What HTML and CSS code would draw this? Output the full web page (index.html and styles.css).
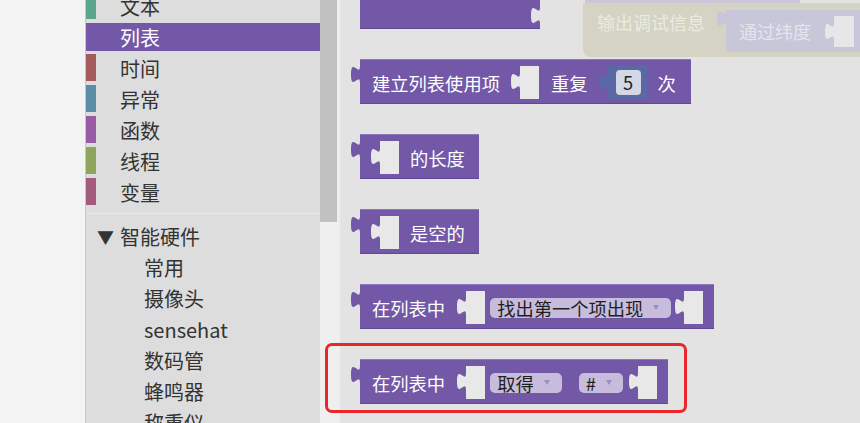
FILE: index.html
```html
<!DOCTYPE html>
<html lang="zh-CN">
<head>
<meta charset="utf-8">
<title>Blockly 列表</title>
<link rel="stylesheet" href="styles.css">
</head>
<body>
<div class="app">
  <aside class="toolbox">
    <div class="cat first"><span class="strip c-text"></span><span class="label">文本</span></div>
    <div class="cat sel"><span class="strip"></span><span class="label">列表</span></div>
    <div class="cat"><span class="strip c-time"></span><span class="label">时间</span></div>
    <div class="cat"><span class="strip c-exc"></span><span class="label">异常</span></div>
    <div class="cat"><span class="strip c-func"></span><span class="label">函数</span></div>
    <div class="cat"><span class="strip c-thread"></span><span class="label">线程</span></div>
    <div class="cat"><span class="strip c-var"></span><span class="label">变量</span></div>
    <div class="sep"></div>
    <div class="tree-head"><span class="arrow">▼</span>智能硬件</div>
    <div class="sub">常用</div>
    <div class="sub">摄像头</div>
    <div class="sub">sensehat</div>
    <div class="sub">数码管</div>
    <div class="sub">蜂鸣器</div>
    <div class="sub">称重仪</div>
  </aside>
  <div class="scrollbar"><div class="thumb"></div></div>
  <main class="flyout">
    <div class="ghost-top"></div>
    <div class="ghost">
      <span class="ghost-txt">输出调试信息</span>
      <div class="ghost-in">
        <svg class="tab" width="9" height="17" viewBox="0 0 9 17"><path d="M9 0C9 11.3 0 -9 0 8.5S9 5.7 9 17Z" fill="#c8c7d9"/></svg>
        <span class="ghost-label">通过纬度</span>
        <svg class="ghost-sock" width="29" height="31" viewBox="0 0 29 31"><path d="M29 0H9V7C9 18.3 0 -2 0 15.5S9 12.7 9 24V31H29Z" fill="#e7e7ea"/></svg>
      </div>
    </div>

    <div class="blocks">
      <div class="block top-block">
        <svg class="notch" width="9" height="17" viewBox="0 0 9 17"><path d="M9 0C9 11.3 0 -9 0 8.5S9 5.7 9 17Z" fill="#e3e3e3"/></svg>
      </div>

      <div class="block">
        <svg class="tab" width="9" height="17" viewBox="0 0 9 17"><path d="M9 0C9 11.3 0 -9 0 8.5S9 5.7 9 17Z" fill="#7258a6"/></svg>
        <span class="txt">建立列表使用项</span>
        <svg class="sock" width="28" height="33" viewBox="0 0 28 33"><path d="M28 0H9V7C9 18.3 0 -2 0 15.5S9 12.7 9 24V33H28Z" fill="#e8e8e8"/></svg>
        <span class="txt">重复</span>
        <div class="num">
          <svg class="tab num-tab" width="9" height="17" viewBox="0 0 9 17"><path d="M9 0C9 11.3 0 -9 0 8.5S9 5.7 9 17Z" fill="#5b68a6"/></svg>
          <span class="field">5</span>
        </div>
        <span class="txt t-ci">次</span>
      </div>

      <div class="block">
        <svg class="tab" width="9" height="17" viewBox="0 0 9 17"><path d="M9 0C9 11.3 0 -9 0 8.5S9 5.7 9 17Z" fill="#7258a6"/></svg>
        <svg class="sock" width="28" height="33" viewBox="0 0 28 33"><path d="M28 0H9V7C9 18.3 0 -2 0 15.5S9 12.7 9 24V33H28Z" fill="#e8e8e8"/></svg>
        <span class="txt t-end">的长度</span>
      </div>

      <div class="block">
        <svg class="tab" width="9" height="17" viewBox="0 0 9 17"><path d="M9 0C9 11.3 0 -9 0 8.5S9 5.7 9 17Z" fill="#7258a6"/></svg>
        <svg class="sock" width="28" height="33" viewBox="0 0 28 33"><path d="M28 0H9V7C9 18.3 0 -2 0 15.5S9 12.7 9 24V33H28Z" fill="#e8e8e8"/></svg>
        <span class="txt t-end">是空的</span>
      </div>

      <div class="block">
        <svg class="tab" width="9" height="17" viewBox="0 0 9 17"><path d="M9 0C9 11.3 0 -9 0 8.5S9 5.7 9 17Z" fill="#7258a6"/></svg>
        <span class="txt">在列表中</span>
        <svg class="sock s-after-txt" width="28" height="33" viewBox="0 0 28 33"><path d="M28 0H9V7C9 18.3 0 -2 0 15.5S9 12.7 9 24V33H28Z" fill="#e8e8e8"/></svg>
        <span class="drop d-first">找出第一个项出现<svg width="6" height="5" viewBox="0 0 6 5"><path d="M0 0H6L3 5Z" fill="#9a8fc2"/></svg></span>
        <svg class="sock s-after-drop" width="28" height="33" viewBox="0 0 28 33"><path d="M28 0H9V7C9 18.3 0 -2 0 15.5S9 12.7 9 24V33H28Z" fill="#e8e8e8"/></svg>
      </div>

      <div class="block">
        <svg class="tab" width="9" height="17" viewBox="0 0 9 17"><path d="M9 0C9 11.3 0 -9 0 8.5S9 5.7 9 17Z" fill="#7258a6"/></svg>
        <span class="txt">在列表中</span>
        <svg class="sock s-after-txt" width="28" height="33" viewBox="0 0 28 33"><path d="M28 0H9V7C9 18.3 0 -2 0 15.5S9 12.7 9 24V33H28Z" fill="#e8e8e8"/></svg>
        <span class="drop d-first">取得<svg width="6" height="5" viewBox="0 0 6 5"><path d="M0 0H6L3 5Z" fill="#9a8fc2"/></svg></span>
        <span class="drop d-second">#<svg width="6" height="5" viewBox="0 0 6 5"><path d="M0 0H6L3 5Z" fill="#9a8fc2"/></svg></span>
        <svg class="sock s-after-drop2" width="28" height="33" viewBox="0 0 28 33"><path d="M28 0H9V7C9 18.3 0 -2 0 15.5S9 12.7 9 24V33H28Z" fill="#e8e8e8"/></svg>
      </div>
    </div>
  </main>
</div>
<div class="highlight"></div>
</body>
</html>
```

FILE: styles.css
```css
* {
  box-sizing: border-box;
}

body {
  margin: 0;
  width: 860px;
  height: 423px;
  overflow: hidden;
  position: relative;
  background: #f3f3f3;
  font-family: "Noto Sans CJK SC", "Liberation Sans", sans-serif;
}

.app {
  display: flex;
  height: 423px;
  padding-left: 85px;
}

/* ---------- toolbox ---------- */
.toolbox {
  width: 235px;
  flex: none;
  background: #dddddd;
  border-left: 1px solid #c8c8c8;
  overflow: hidden;
  display: flex;
  flex-direction: column;
  color: #333;
  font-size: 20px;
}

.cat {
  flex: none;
  height: 27px;
  margin-bottom: 4px;
  display: flex;
  align-items: center;
}

.cat.first {
  margin-top: -8px;
}

.strip {
  width: 10px;
  align-self: stretch;
}

.c-text { background: #5ba58c; }
.c-time { background: #a55b5b; }
.c-exc { background: #5b8da6; }
.c-func { background: #995ba6; }
.c-thread { background: #8da65b; }
.c-var { background: #a55b80; }

.cat .label {
  margin-left: 24px;
  padding-top: 2px;
  line-height: 24px;
  white-space: nowrap;
}

.cat.sel {
  background: #7258a6;
  color: #fff;
  height: 28px;
  margin-bottom: 3px;
}

.sep {
  flex: none;
  height: 1px;
  background: #e9e9e9;
  margin: 4px 0 7px;
}

.tree-head {
  flex: none;
  height: 31px;
  display: flex;
  align-items: center;
  padding-left: 11px;
  white-space: nowrap;
}

.arrow {
  display: inline-block;
  width: 23px;
  font-size: 17px;
}

.sub {
  flex: none;
  height: 31px;
  display: flex;
  align-items: center;
  padding-left: 58px;
  white-space: nowrap;
}

/* ---------- scrollbar ---------- */
.scrollbar {
  width: 20px;
  flex: none;
  background: #efefef;
}

.thumb {
  width: 17px;
  height: 222px;
  background: #c1c1c1;
}

/* ---------- flyout ---------- */
.flyout {
  flex: 1;
  position: relative;
  overflow: hidden;
  background: #e3e3e3;
  padding-left: 20px;
}

.blocks {
  display: flex;
  flex-direction: column;
  align-items: flex-start;
  gap: 30px;
  margin-top: -16px;
}

.block {
  display: flex;
  align-items: center;
  height: 45px;
  padding: 7px 11px 5px 0;
  background: #7258a6;
  color: #fff;
  font-size: 18.3px;
  white-space: nowrap;
  box-shadow: inset 0 1px 0 #8b76bb, inset 0 -1px 0 #5e4891;
}

.block svg {
  display: block;
  flex: none;
  overflow: visible;
}

.tab {
  align-self: flex-start;
  margin-left: -9px;
}

.top-block {
  width: 180px;
  padding: 0;
  justify-content: flex-end;
  align-items: flex-start;
}

.notch {
  margin-top: 23px;
}

.txt {
  margin-left: 12px;
  line-height: 24px;
}

.t-end {
  margin-left: 11px;
  margin-right: 3px;
}

.t-ci {
  margin-left: 11px;
  margin-right: 4px;
}

.sock {
  margin-left: 11px;
}

.s-after-txt {
  margin-left: 12px;
}

.s-after-drop {
  margin-left: 4px;
}

.s-after-drop2 {
  margin-left: 6px;
}

.num {
  display: flex;
  align-items: center;
  height: 34px;
  margin-left: 20px;
  padding-right: 6px;
  background: #5b68a6;
}

.num-tab {
  margin-top: 7px;
}

.field {
  margin-left: 8px;
  width: 25px;
  height: 25px;
  border-radius: 4px;
  background: #d4d7e6;
  color: #222;
  text-align: center;
  line-height: 25px;
}

.drop {
  display: flex;
  align-items: center;
  height: 20px;
  padding: 0 12px 0 7px;
  border-radius: 5px;
  background: #c7bcdc;
  color: #1f1f1f;
  line-height: 20px;
}

.drop svg {
  margin-left: 10px;
}

.d-first {
  margin-left: 5px;
}

.d-second {
  margin-left: 17px;
  padding-right: 11px;
}

/* ---------- faded workspace blocks behind the flyout ---------- */
.ghost-top {
  position: absolute;
  left: 245px;
  top: 0;
  width: 215px;
  height: 3px;
  background: #ccc7d8;
}

.ghost {
  position: absolute;
  left: 243px;
  top: 3px;
  width: 300px;
  height: 54px;
  display: flex;
  align-items: flex-start;
  padding: 7px 0 0 14px;
  background: #d5d3c4;
  border-bottom-left-radius: 8px;
  white-space: nowrap;
}

.ghost-txt {
  color: #ebeae1;
  font-size: 18px;
  line-height: 24px;
}

.ghost-in {
  flex: 1;
  height: 42px;
  margin-left: 21px;
  display: flex;
  align-items: center;
  background: #c8c7d9;
}

.ghost-in svg {
  display: block;
  flex: none;
  overflow: visible;
}

.ghost-label {
  margin-left: 13px;
  color: #e5e4ed;
  font-size: 18px;
  line-height: 24px;
}

.ghost-sock {
  margin-left: 14px;
}

/* ---------- annotation ---------- */
.highlight {
  position: absolute;
  left: 325px;
  top: 343px;
  width: 362px;
  height: 70px;
  border: 3px solid #e8262b;
  border-radius: 7px;
}
```
